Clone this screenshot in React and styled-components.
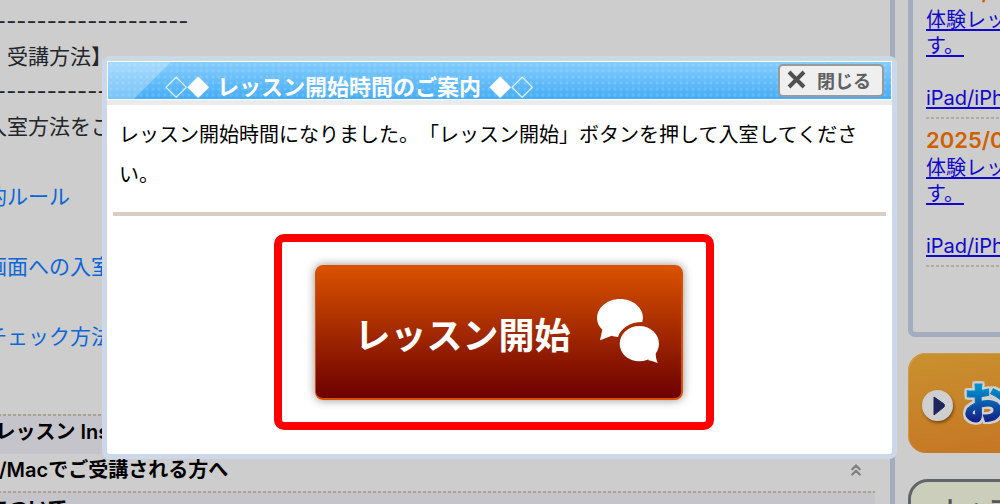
import React from "react";
import styled, { createGlobalStyle, css } from "styled-components";
import { ChevronsUp } from "lucide-react";

const GlobalStyle = createGlobalStyle`
  *, *::before, *::after { box-sizing: border-box; }
  body {
    margin: 0;
    overflow: hidden;
    background: #cdcdcd;
    font-family: Inter, "Noto Sans CJK JP", sans-serif;
    color: #222529;
  }
  h2, h3, p { margin: 0; font-weight: inherit; font-size: inherit; }
`;

const Page = styled.div`
  display: flex;
  gap: 13px;
  height: 100vh;
  overflow: hidden;
`;

const Main = styled.main`
  flex: 1;
  min-width: 0;
  overflow: hidden;
  padding: 4px 15px 0 0;
  border-right: 5px solid #a3adbd;
`;

const Article = styled.div`
  margin-left: -14px;
  padding-bottom: 60px;
  font-size: 21px;
  line-height: 35px;
  white-space: pre;
`;

const Line = styled.p`
  min-height: 35px;
`;

const DashLine = styled.p`
  height: 35px;
  font-size: 22px;
`;

const GuideLink = styled.a`
  color: #0b66d8;
  text-decoration: none;
`;

const dashes = (color) =>
  `repeating-linear-gradient(90deg, ${color} 0 3px, transparent 3px 5px)`;

const Section = styled.h3`
  display: flex;
  align-items: center;
  justify-content: space-between;
  height: ${(p) => (p.$shaded ? 40 : 37)}px;
  margin-left: -12px;
  padding: 0 10px 5px 0;
  font-size: 20px;
  font-weight: 600;
  line-height: 28px;
  color: #000;
  ${(p) =>
    p.$shaded &&
    css`
      background: ${dashes("#aca38f")} 0 0 / 100% 2px no-repeat, #c5c4ca;
    `}
`;

const Aside = styled.aside`
  width: 92px;
  overflow: hidden;
`;

const News = styled.section`
  width: 240px;
  height: 337px;
  padding: 7px 13px 65px;
  border: 5px solid #a3adbd;
  border-top: 0;
  border-radius: 0 0 7px 7px;
  display: flex;
  flex-direction: column;
  justify-content: flex-end;
`;

const NewsItem = styled.article`
  padding: 8px 0;
  background: ${dashes("#b3aaa0")} 0 100% / 100% 2px no-repeat;
`;

const NewsDate = styled.h3`
  margin-bottom: 2px;
  font-size: 22px;
  font-weight: 600;
  line-height: 26px;
  color: #d06000;
`;

const NewsLink = styled.a`
  display: block;
  font-size: 20px;
  line-height: 26px;
  color: #1008cc;
  text-decoration: underline;
  text-underline-offset: 2px;
  text-decoration-thickness: 2px;
  text-decoration-skip-ink: none;
  white-space: nowrap;
`;

const Banner = styled.button`
  display: flex;
  align-items: center;
  gap: 10px;
  width: 240px;
  height: 100px;
  margin-top: 16px;
  padding: 4px 0 0 14px;
  border: 0;
  border-radius: 18px;
  background: linear-gradient(170deg, #c9912f, #c57021);
  box-shadow: inset 1px 1px 1px #d09a48;
`;

const BannerDot = styled.span`
  display: flex;
  width: 31px;
  height: 31px;
  border-radius: 50%;
  background: #cfcfd0;
  box-shadow: 1px 2px 3px #7c4a12;
`;

const BannerText = styled.span`
  padding-bottom: 8px;
  font-family: "Noto Sans CJK JP", sans-serif;
  font-size: 42px;
  font-weight: 900;
  line-height: 50px;
  color: transparent;
  background: linear-gradient(#0090cc 20%, #161a84 80%);
  background-clip: text;
  -webkit-text-stroke: 1px transparent;
  filter: drop-shadow(2px 0 0 #cfd0d0) drop-shadow(-2px 0 0 #cfd0d0)
    drop-shadow(0 2px 0 #cfd0d0) drop-shadow(0 -2px 0 #cfd0d0);
`;

const LessonCard = styled.button`
  display: flex;
  align-items: flex-start;
  width: 240px;
  height: 90px;
  margin-top: 26px;
  padding: 12px 0 0 33px;
  border: 3px solid #61656b;
  border-radius: 20px;
  background: #cccebc;
  font-family: "Noto Sans CJK JP", sans-serif;
  font-size: 22px;
  line-height: 24px;
  font-weight: 700;
  color: #55575a;
`;

const Overlay = styled.div`
  position: absolute;
  inset: 0;
  padding: 56px 103px 0 102px;
`;

const Dialog = styled.section`
  border: 5px solid #ccd8ea;
  border-top-color: #cbd9e4;
  border-radius: 8px;
  background: #fff;
`;

const DialogHeader = styled.header`
  display: flex;
  align-items: flex-end;
  justify-content: space-between;
  height: 39px;
  padding: 0 7px 0 57px;
  border: 1px solid #fff;
  background:
    linear-gradient(135deg, rgba(255, 255, 255, 0.28) 0 44px, transparent 45px) no-repeat,
    radial-gradient(circle, rgba(255, 255, 255, 0.14) 1px, transparent 2px) 0 0 / 6px 6px,
    linear-gradient(#84ccff, #45adf5);
`;

const HeaderShade = styled.div`
  height: 5px;
  background: #ebebeb;
`;

const Title = styled.h2`
  display: flex;
  gap: 8px;
  padding-bottom: 2px;
  font-family: "Noto Sans CJK JP", sans-serif;
  font-size: 22px;
  font-weight: 700;
  line-height: 24px;
  color: #fff;
  white-space: nowrap;
`;

const Diamonds = styled.span`
  font-weight: 400;
`;

const CloseButton = styled.button`
  display: flex;
  align-items: center;
  gap: 11px;
  height: 33px;
  margin-bottom: 2px;
  padding: 0 11px 2px 7px;
  border: 2px solid #9a9a9a;
  border-radius: 5px;
  background: #efefef;
  font-family: "Noto Sans CJK JP", sans-serif;
  font-size: 18px;
  font-weight: 700;
  line-height: 24px;
  color: #606060;
`;

const DialogBody = styled.div`
  padding: 9px 6px 24px;
`;

const Message = styled.p`
  padding: 0 14px 0 6px;
  font-family: "Noto Sans CJK JP", sans-serif;
  font-size: 20px;
  line-height: 40px;
  color: #000;
  text-spacing-trim: space-all;
`;

const Rule = styled.hr`
  height: 4px;
  margin: 18px 0;
  border: 0;
  background: #d8cec1;
`;

const Actions = styled.div`
  display: flex;
  justify-content: center;
  padding-right: 12px;
`;

const Highlight = styled.div`
  width: 440px;
  padding: 23px 23px 22px 33px;
  border: 8px solid #f00;
  border-radius: 10px;
`;

const StartButton = styled.button`
  display: flex;
  align-items: center;
  justify-content: space-between;
  width: 100%;
  height: 135px;
  padding: 0 22px 2px 39px;
  border: 1px solid #d85000;
  border-bottom-width: 2px;
  border-right-width: 2px;
  border-radius: 8px;
  background: linear-gradient(#da5200, #6c0000);
  box-shadow: 0 0 10px rgba(0, 0, 0, 0.45);
  font-family: "Noto Sans CJK JP", sans-serif;
  font-size: 36px;
  font-weight: 700;
  line-height: 40px;
  color: #fff;
`;

const StartLabel = styled.span`
  padding-top: 4px;
`;

function Chat() {
  return (
    <svg width="62" height="64" viewBox="0 0 186 192" fill="#fff" aria-hidden="true">
      <path d="M9 124 L16 92 C5 82 0 70 0 58 C0 26 31 0 69 0 C107 0 138 26 138 56 L136 69 C98 69 72 88 63 114 C55 113 50 112 44 110 Z" />
      <ellipse cx="127" cy="134" rx="59" ry="53" />
      <path d="M152 183 C162 185 172 189 182 192 C178 182 176 174 176 162 Z" />
    </svg>
  );
}

function NewsEntry({ date }) {
  return (
    <NewsItem>
      <NewsDate>{date}</NewsDate>
      <NewsLink href="#news">
        体験レッスン
        <br />
        す。
        <br />
        <br />
        iPad/iPhone
      </NewsLink>
    </NewsItem>
  );
}

export default function App() {
  return (
    <>
      <GlobalStyle />
      <Page>
        <Main>
          <Article>
            <DashLine>--------------------</DashLine>
            <Line>{"　受講方法】"}</Line>
            <DashLine>--------------------</DashLine>
            <Line>入室方法をご覧</Line>
            <Line />
            <Line><GuideLink href="#rules">的ルール</GuideLink></Line>
            <Line />
            <Line><GuideLink href="#enter">画面への入室</GuideLink></Line>
            <Line />
            <Line><GuideLink href="#check">チェック方法</GuideLink></Line>
          </Article>
          <Section $shaded>)レッスン Inst</Section>
          <Section>
            s/Macでご受講される方へ
            <ChevronsUp size={18} color="#808080" strokeWidth={3} />
          </Section>
          <Section $shaded>について</Section>
        </Main>
        <Aside>
          <News>
            <NewsEntry date="2025/0" />
            <NewsEntry date="2025/0" />
          </News>
          <Banner>
            <BannerDot>
              <svg width="31" height="31" viewBox="0 0 31 31" aria-hidden="true">
                <path d="M12 7 L22 14 Q23 15.500 22 17 L12 25 Z" fill="#20245c" stroke="#20245c" strokeLinejoin="round" />
              </svg>
            </BannerDot>
            <BannerText>お</BannerText>
          </Banner>
          <LessonCard>レッスン</LessonCard>
        </Aside>
      </Page>
      <Overlay>
        <Dialog role="dialog" aria-labelledby="dialog-title">
          <DialogHeader>
            <Title id="dialog-title">
              <Diamonds>◇◆</Diamonds>
              <span>レッスン開始時間のご案内</span>
              <Diamonds>◆◇</Diamonds>
            </Title>
            <CloseButton>
              <svg width="19" height="19" viewBox="0 0 19 19" aria-hidden="true">
                <path d="M2 2 L17 17 M17 2 L2 17" stroke="#505050" strokeWidth="4" />
              </svg>
              閉じる
            </CloseButton>
          </DialogHeader>
          <HeaderShade />
          <DialogBody>
            <Message>
              レッスン開始時間になりました。「レッスン開始」ボタンを押して入室してください。
            </Message>
            <Rule />
            <Actions>
              <Highlight>
                <StartButton>
                  <StartLabel>レッスン開始</StartLabel>
                  <Chat />
                </StartButton>
              </Highlight>
            </Actions>
          </DialogBody>
        </Dialog>
      </Overlay>
    </>
  );
}
